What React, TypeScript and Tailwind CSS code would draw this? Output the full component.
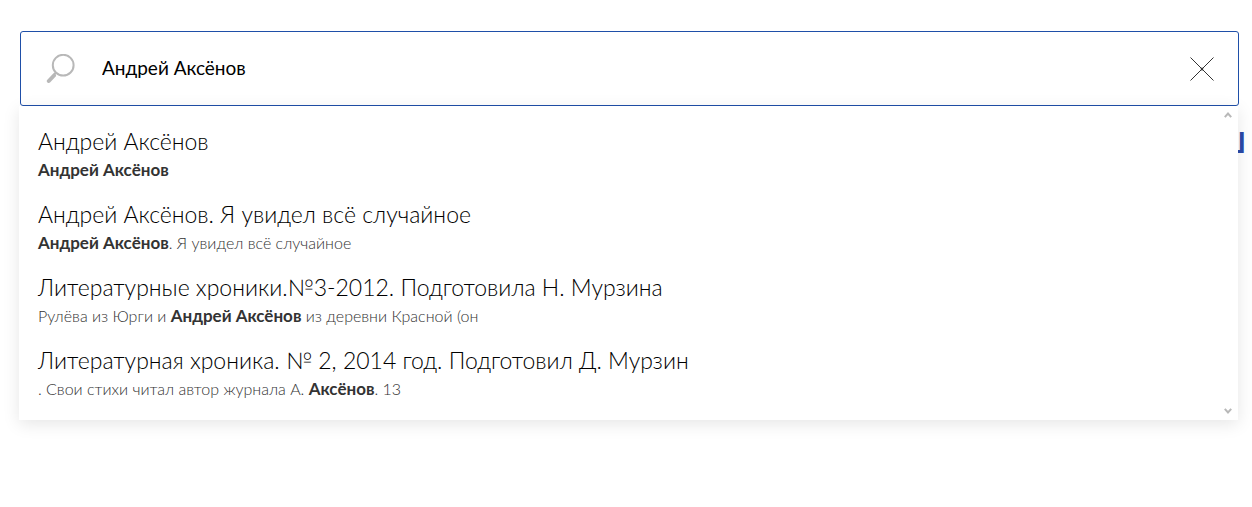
import { ChangeEvent, ReactNode, useState } from 'react'

type Result = {
  title: string
  snippet: ReactNode
}

const Match = ({ children }: { children: ReactNode }) => (
  <b className="text-[17px] font-bold text-[#333333]">{children}</b>
)

const results: Result[] = [
  {
    title: 'Андрей Аксёнов',
    snippet: <Match>Андрей Аксёнов</Match>
  },
  {
    title: 'Андрей Аксёнов. Я увидел всё случайное',
    snippet: (
      <>
        <Match>Андрей Аксёнов</Match>. Я увидел всё случайное
      </>
    )
  },
  {
    title: 'Литературные хроники.№3-2012. Подготовила Н. Мурзина',
    snippet: (
      <>
        Рулёва из Юрги и <Match>Андрей Аксёнов</Match> из деревни Красной (он
      </>
    )
  },
  {
    title: 'Литературная хроника. № 2, 2014 год. Подготовил Д. Мурзин',
    snippet: (
      <>
        . Свои стихи читал автор журнала А. <Match>Аксёнов</Match>. 13
      </>
    )
  }
]

const SearchIcon = () => (
  <svg viewBox="0 0 30 30" className="h-[30px] w-[30px]" fill="none" stroke="#b8b8b8">
    <circle cx="17.2" cy="11.2" r="10.4" strokeWidth="2" />
    <path d="M10.2 18.2 7.5 21" strokeWidth="2" />
    <path d="M8 21.5 2.8 27" strokeWidth="4" strokeLinecap="round" />
  </svg>
)

const CloseIcon = () => (
  <svg viewBox="0 0 24 24" className="h-6 w-6" fill="none" stroke="#333333">
    <path d="M.5.5 23.5 23.5M23.5.5.5 23.5" />
    <path d="M11 11 13 13M13 11 11 13" strokeWidth="1.5" />
  </svg>
)

const Chevron = ({ className }: { className: string }) => (
  <svg viewBox="0 0 8 6" className={className} fill="none" stroke="#b8b8b8" strokeWidth="2">
    <path d="M.8 5.2 4 1.6 7.2 5.2" />
  </svg>
)

const App = () => {
  const [query, setQuery] = useState('Андрей Аксёнов')

  const handleChange = (e: ChangeEvent<HTMLInputElement>) => {
    setQuery(e.target.value)
  }

  return (
    <main className="min-h-screen bg-white pt-[31px] font-['Lato','Open_Sans',sans-serif]">
      <div className="relative mr-[13px] ml-5">
        <form
          className="flex h-[75px] items-center rounded-[3px] border border-[#1f4fa8] pr-6 pl-[25px]"
          onSubmit={(e) => e.preventDefault()}
        >
          <button type="submit" aria-label="Найти">
            <SearchIcon />
          </button>
          <input
            type="text"
            aria-label="Поиск"
            value={query}
            onChange={handleChange}
            className="min-w-0 grow bg-transparent pl-[26px] text-[19px] text-black outline-none"
          />
          <button type="button" aria-label="Очистить" onClick={() => setQuery('')}>
            <CloseIcon />
          </button>
        </form>
        <div className="absolute top-full right-px -left-px bg-white py-[19px] pl-[19px] shadow-[0_4px_16px_rgba(0,0,0,0.1)]">
          <ul className="space-y-4">
            {results.map((result) => (
              <li key={result.title}>
                <a href="#result" className="block">
                  <span className="block text-[23px] leading-8 font-light text-black">
                    {result.title}
                  </span>
                  <span className="block text-base leading-[25px] font-light text-[#333333]">
                    {result.snippet}
                  </span>
                </a>
              </li>
            ))}
          </ul>
          <Chevron className="absolute top-1.5 right-1.5 h-1.5 w-2" />
          <Chevron className="absolute right-1.5 bottom-1.5 h-1.5 w-2 rotate-180" />
        </div>
      </div>
      <h2 className="pt-4 pr-1.5 text-right text-[28px] leading-10 font-bold text-[#2b4aa8]">
        Ш
      </h2>
    </main>
  )
}

export default App
